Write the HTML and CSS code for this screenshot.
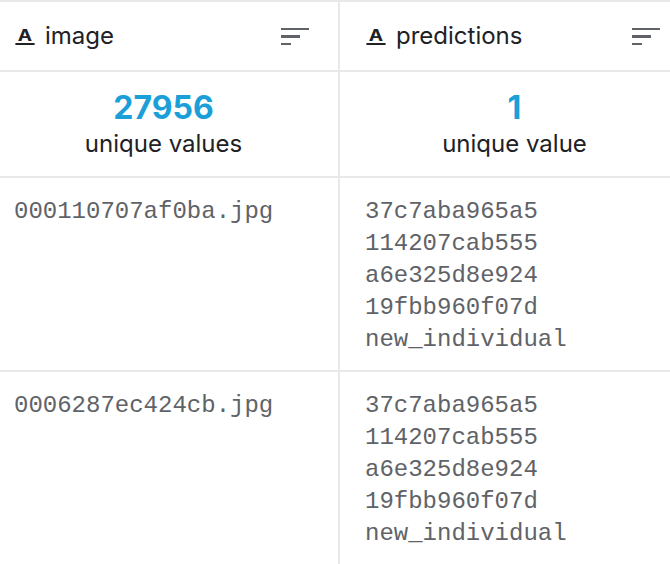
FILE: index.html
```html
<!DOCTYPE html>
<html>
<head>
<meta charset="utf-8">
<link rel="stylesheet" href="styles.css">
</head>
<body>
<div class="table">
  <div class="cell head">
    <span class="type-icon">A</span>
    <span class="col-name">image</span>
    <span class="sort"><i class="b1"></i><i class="b2"></i><i class="b3"></i></span>
  </div>
  <div class="cell head">
    <span class="type-icon">A</span>
    <span class="col-name">predictions</span>
    <span class="sort"><i class="b1"></i><i class="b2"></i><i class="b3"></i></span>
  </div>
  <div class="cell stats">
    <div class="num">27956</div>
    <div class="label">unique values</div>
  </div>
  <div class="cell stats">
    <div class="num">1</div>
    <div class="label">unique value</div>
  </div>
  <div class="cell data">
    <div>000110707af0ba.jpg</div>
  </div>
  <div class="cell data">
    <div>37c7aba965a5</div>
    <div>114207cab555</div>
    <div>a6e325d8e924</div>
    <div>19fbb960f07d</div>
    <div>new_individual</div>
  </div>
  <div class="cell data">
    <div>0006287ec424cb.jpg</div>
  </div>
  <div class="cell data">
    <div>37c7aba965a5</div>
    <div>114207cab555</div>
    <div>a6e325d8e924</div>
    <div>19fbb960f07d</div>
    <div>new_individual</div>
  </div>
</div>
</body>
</html>
```

FILE: styles.css
```css
html, body {
  margin: 0;
  padding: 0;
  background: #ffffff;
  overflow: hidden;
}
body {
  width: 670px;
  height: 564px;
  font-family: Inter, "Noto Sans", sans-serif;
  color: #202124;
}
.table {
  margin-left: -11px;
  width: 702px;
  display: grid;
  grid-template-columns: 351px 351px;
  border-top: 2px solid #e8e8e8;
}
.cell {
  border-right: 2px solid #e8e8e8;
  border-bottom: 2px solid #e8e8e8;
}
.head {
  height: 68px;
  display: flex;
  align-items: center;
  padding: 0 29px 0 28px;
}
.type-icon {
  font-family: Inter, sans-serif;
  font-weight: 700;
  font-size: 16px;
  line-height: 14px;
  width: 16px;
  text-align: center;
  border-bottom: 2px solid #202124;
  padding-bottom: 1px;
  margin-top: 1px;
  transform: scaleX(1.2);
}
.col-name {
  font-size: 24px;
  margin-left: 12px;
  flex: 1;
  line-height: 30px;
}
.sort {
  display: flex;
  flex-direction: column;
  gap: 5px;
  width: 28px;
  margin-top: 1px;
}
.sort i {
  display: block;
  height: 2.5px;
  background: #5f6368;
}
.sort .b1 { width: 28px; }
.sort .b2 { width: 19px; }
.sort .b3 { width: 10px; }
.stats {
  height: 86px;
  padding-top: 18px;
  text-align: center;
}
.num {
  font-size: 32px;
  font-weight: 700;
  line-height: 36px;
  color: #1a9fd9;
}
.label {
  font-size: 24px;
  line-height: 36px;
}
.data {
  padding: 18px 25px 14px;
  font-family: "Liberation Mono", "DejaVu Sans Mono", monospace;
  font-size: 24px;
  line-height: 32px;
  color: #5f6368;
  height: 160px;
}
```
